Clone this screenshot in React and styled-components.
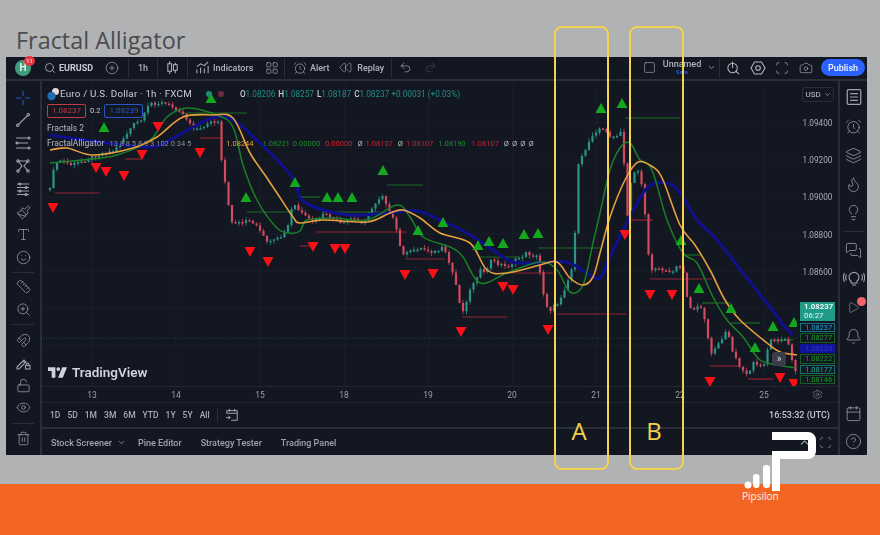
import React from 'react';
import styled, { createGlobalStyle } from 'styled-components';
import {
  AlarmClock, Bell, Calendar, Camera, ChevronDown, ChevronUp, CircleHelp, CirclePlus, Eye, Flame,
  Layers, LayoutGrid, Lightbulb, LockOpen, Magnet, MessagesSquare, Paintbrush, Play, Redo2, Rewind,
  Ruler, Scan, Search, Settings, Smile, Square, Trash2, Type, Undo2, ZoomIn,
} from 'lucide-react';

const GlobalStyle = createGlobalStyle`
  html, body { margin: 0; padding: 0; }
  body { width: 880px; height: 535px; overflow: hidden; background: #b1b2b4; }
  * { box-sizing: border-box; }
`;

/* chart data, in page pixels (the svg viewBox starts at the pane's page offset) */
const closes = [[50,190],[52,170],[60,160],[72,165],[85,160],[97,155],[115,150],[133,125],[142,120],[150,103],[163,103],[180,110],[193,127],[200,130],[208,122],[218,123],[222,167],[227,193],[230,220],[237,223],[247,220],[257,227],[263,237],[270,243],[280,238],[287,230],[293,203],[300,212],[305,217],[313,222],[323,215],[333,218],[342,225],[350,218],[363,222],[370,212],[377,200],[385,193],[387,212],[395,222],[400,247],[405,255],[417,248],[428,250],[435,252],[443,248],[448,260],[454,277],[458,293],[462,315],[467,298],[473,283],[480,270],[485,275],[490,260],[507,267],[520,257],[527,253],[537,257],[542,283],[545,303],[550,310],[558,303],[567,283],[574,262],[577,170],[585,150],[593,133],[600,128],[610,135],[618,138],[622,128],[624,165],[627,222],[630,185],[635,170],[640,172],[643,195],[647,237],[650,270],[655,267],[663,270],[668,273],[675,268],[682,263],[685,283],[688,303],[695,313],[700,303],[703,313],[707,327],[710,360],[713,350],[720,343],[723,337],[728,330],[732,350],[738,363],[743,372],[748,375],[753,363],[763,367],[769,343],[773,338],[780,340],[787,340],[795,370]];

const jaw = [[50,135],[100,142],[150,147],[170,140],[195,126],[215,117],[233,120],[260,143],[293,178],[300,198],[317,208],[350,215],[387,213],[417,211],[440,220],[467,233],[490,248],[513,262],[540,263],[567,262],[587,273],[600,278],[610,257],[632,213],[648,187],[667,183],[680,193],[697,220],[717,240],[743,273],[770,307],[785,327],[793,335]];
const lips = [[50,150],[67,148],[93,155],[133,148],[157,137],[183,117],[213,115],[233,118],[250,153],[267,178],[277,193],[293,217],[300,223],[323,220],[367,222],[390,213],[403,210],[420,218],[440,233],[470,243],[487,270],[507,273],[540,265],[557,262],[570,278],[583,285],[593,277],[600,253],[610,217],[625,180],[638,162],[653,167],[663,180],[680,225],[695,245],[710,270],[725,300],[740,320],[767,343],[780,352],[797,355]];
const teeth = [[50,163],[83,160],[117,155],[150,140],[167,117],[187,108],[217,115],[233,127],[243,165],[257,200],[277,228],[290,233],[300,231],[307,220],[333,218],[367,220],[397,205],[410,217],[423,237],[450,247],[463,257],[480,283],[507,273],[540,262],[557,270],[570,292],[583,285],[593,243],[600,213],[610,170],[620,148],[630,143],[640,160],[652,170],[667,220],[683,253],[697,263],[713,297],[727,320],[743,337],[757,357],[767,363],[795,368]];

const upMarks = [[104,127],[211,98],[246,197],[295,182],[327,197],[338,197],[352,197],[383,170],[418,230],[443,222],[478,245],[489,241],[503,243],[524,234],[538,233],[601,108],[622,103],[681,240],[699,288],[731,308],[755,347],[773,326],[794,322]];
const downMarks = [[53,208],[158,127],[200,153],[96,168],[106,172],[124,176],[142,155],[250,252],[268,262],[313,247],[335,249],[345,249],[405,275],[433,274],[461,332],[503,287],[513,290],[548,330],[625,235],[650,295],[672,295],[710,382],[780,378],[794,384]];

const redLevels = [[55,100,193],[125,142,159],[200,220,138],[300,310,246],[315,407,232],[405,445,259],[462,507,317],[513,553,273],[557,627,314],[628,653,220],[650,712,279],[710,740,366],[748,773,379]];
const greenLevels = [[180,247,113],[247,293,212],[300,320,197],[323,380,212],[387,423,185],[480,520,257],[538,600,248],[625,680,118],[685,702,255],[702,730,303],[731,760,323],[773,793,340]];

const dayLabels = ['13', '14', '15', '18', '19', '20', '21', '22', '25'];
const priceTicks = ['1.09400', '1.09200', '1.09000', '1.08800', '1.08600'];
const priceTags = [
  { text: '1.08237', color: '#2a9fd6', border: '#1d6f86', bg: 'transparent' },
  { text: '1.08277', color: '#1f9a2a', border: '#175c22', bg: 'transparent' },
  { text: '1.08239', color: '#2a38c8', border: '#12149a', bg: '#12149a' },
  { text: '1.08222', color: '#1f9a2a', border: '#175c22', bg: 'transparent' },
  { text: '1.08177', color: '#26a69a', border: '#1d6f6a', bg: 'transparent' },
  { text: '1.08146', color: '#1f9a2a', border: '#175c22', bg: 'transparent' },
];
const ranges = ['1D', '5D', '1M', '3M', '6M', 'YTD', '1Y', '5Y', 'All'];

const frac = (i) => {
  const v = Math.sin(i * 12.9898) * 43758.5453;
  return v - Math.floor(v);
};

const yAt = (x) => {
  for (let i = 1; i < closes.length; i++) {
    if (x <= closes[i][0]) {
      const [x0, y0] = closes[i - 1];
      const [x1, y1] = closes[i];
      return y0 + ((y1 - y0) * (x - x0)) / (x1 - x0);
    }
  }
  return closes[closes.length - 1][1];
};

const buildCandles = () => {
  const list = [];
  let prev = yAt(50);
  for (let i = 0, x = 50; x < 797; i++, x += 3.5) {
    const close = yAt(x) + (frac(i) - 0.5) * 4;
    const top = Math.min(prev, close);
    const bottom = Math.max(prev, close);
    list.push({
      x,
      top,
      height: Math.max(bottom - top, 1.5),
      high: top - frac(i + 100) * 3.5,
      low: bottom + frac(i + 200) * 3.5,
      up: close < prev,
    });
    prev = close;
  }
  return list;
};

const smoothPath = (pts) => {
  let d = `M${pts[0][0]},${pts[0][1]}`;
  for (let i = 0; i < pts.length - 1; i++) {
    const p0 = pts[i - 1] || pts[i];
    const p1 = pts[i];
    const p2 = pts[i + 1];
    const p3 = pts[i + 2] || p2;
    const c1x = p1[0] + (p2[0] - p0[0]) / 6;
    const c1y = p1[1] + (p2[1] - p0[1]) / 6;
    const c2x = p2[0] - (p3[0] - p1[0]) / 6;
    const c2y = p2[1] - (p3[1] - p1[1]) / 6;
    d += `C${c1x},${c1y} ${c2x},${c2y} ${p2[0]},${p2[1]}`;
  }
  return d;
};

const Page = styled.div`
  width: 880px;
  height: 535px;
  position: relative;
  overflow: hidden;
`;

const Stage = styled.div`
  height: 484px;
  padding-top: 26px;
  background: #b1b2b4;
`;

const Title = styled.h1`
  margin: 0 0 0 16px;
  height: 31px;
  font: 400 23.4px/28px 'Open Sans', sans-serif;
  color: #4a4c50;
`;

const Terminal = styled.div`
  margin-left: 6px;
  width: 861px;
  height: 398px;
  display: grid;
  grid-template-columns: 34px 1fr 29px;
  grid-template-rows: 24px 1fr;
  background: #131722;
  color: #b9bcc5;
  font-family: Roboto, 'Liberation Sans', sans-serif;
  filter: blur(0.5px);
`;

const TopBar = styled.div`
  grid-column: 1 / 4;
  display: flex;
  align-items: center;
  border-bottom: 2px solid #2a2e39;
  padding-bottom: 1px;
`;

const Cell = styled.div`
  flex: none;
  width: ${(p) => p.$w}px;
  height: 20px;
  display: flex;
  align-items: center;
  justify-content: ${(p) => (p.$pad !== undefined ? 'flex-start' : 'center')};
  gap: 3px;
  padding-left: ${(p) => p.$pad || 0}px;
  border-right: ${(p) => (p.$sep ? '1px solid #2a2e39' : 'none')};
  font-size: 9px;
  font-weight: 500;
  color: ${(p) => p.$color || '#b0b3bc'};
`;

const TopRight = styled.div`
  margin-left: auto;
  display: flex;
  align-items: center;
  padding-right: 2px;
`;

const Avatar = styled.div`
  position: relative;
  width: 16px;
  height: 16px;
  border-radius: 50%;
  background: #3f9d7c;
  color: #e8f3ee;
  font-size: 10px;
  font-weight: 700;
  line-height: 16px;
  text-align: center;
`;

const Badge = styled.span`
  position: absolute;
  top: -4px;
  left: 9px;
  width: 11px;
  height: 10px;
  border-radius: 50%;
  background: #e8323f;
  color: #f7c6ca;
  font-size: 5.5px;
  line-height: 10px;
`;

const LayoutName = styled.div`
  display: flex;
  flex-direction: column;
  align-items: center;
  font-size: 9px;
  line-height: 9px;
  small {
    font-size: 5.5px;
    line-height: 7px;
    color: #2962ff;
  }
`;

const Publish = styled.button`
  width: 44px;
  height: 17px;
  margin-left: 3px;
  padding: 0;
  border: 0;
  border-radius: 9px;
  background: #2962ff;
  color: #f0f3fa;
  font: 500 9px Roboto, sans-serif;
`;

const SideBar = styled.div`
  display: flex;
  flex-direction: column;
  align-items: center;
  padding-top: ${(p) => (p.$right ? 2 : 6)}px;
  border-left: ${(p) => (p.$right ? '2px solid #2a2e39' : 'none')};
`;

const ToolSlot = styled.div`
  flex: none;
  width: 100%;
  height: ${(p) => p.$h}px;
  display: flex;
  align-items: center;
  justify-content: center;
  position: relative;
  color: #9fa2ab;
`;

const ToolSep = styled.hr`
  flex: none;
  width: 22px;
  height: 1px;
  margin: ${(p) => p.$m || '4px 0'};
  border: 0;
  background: #2a2e39;
`;

const Spacer = styled.div`
  flex: 1;
`;

const Dot = styled.span`
  position: absolute;
  top: 5px;
  right: 1px;
  width: 9px;
  height: 9px;
  border-radius: 50%;
  background: #f0636b;
`;

const Center = styled.div`
  display: flex;
  flex-direction: column;
  min-width: 0;
  border-left: 2px solid #2a2e39;
`;

const ChartRow = styled.div`
  flex: none;
  height: 305px;
  display: flex;
`;

const Pane = styled.div`
  position: relative;
  flex: none;
  width: 755px;
  height: 305px;
`;

const ChartSvg = styled.svg`
  display: block;
`;

const Legend = styled.div`
  position: absolute;
  top: 4px;
  left: 5px;
  display: flex;
  flex-direction: column;
  font-size: 8.5px;
`;

const LegendRow = styled.div`
  display: flex;
  align-items: center;
  gap: ${(p) => p.$gap}px;
  height: ${(p) => p.$h}px;
  white-space: nowrap;
`;

const Symbol = styled.span`
  font-size: 9.8px;
  letter-spacing: 0.2px;
  color: #c8ccd4;
`;

const Ohlc = styled.span`
  margin-left: 13px;
  font-size: 8.2px;
  color: #1f8f82;
  b {
    font-weight: 500;
    color: #c8ccd4;
    margin-left: 3px;
  }
`;

const PriceBox = styled.span`
  width: 39px;
  height: 14px;
  border: 1px solid ${(p) => p.$c};
  border-radius: 2px;
  color: ${(p) => p.$c};
  font-size: 8px;
  line-height: 12px;
  text-align: center;
`;

const Value = styled.span`
  color: ${(p) => p.$c || '#b9bcc5'};
  font-size: 7.5px;
  margin-left: ${(p) => p.$ml || 0}px;
`;

const StatusDot = styled.span`
  width: 6px;
  height: 6px;
  border-radius: 50%;
  background: ${(p) => p.$c};
  margin-left: ${(p) => p.$ml || 0}px;
`;

const Watermark = styled.div`
  position: absolute;
  left: 6px;
  top: 283px;
  display: flex;
  align-items: center;
  gap: 5px;
  font-size: 13.5px;
  font-weight: 600;
  color: #d1d4dc;
`;

const GoLive = styled.div`
  position: absolute;
  left: 730px;
  top: 271px;
  width: 14px;
  height: 14px;
  border-radius: 3px;
  background: #3a3d47;
  color: #d1d4dc;
  font-size: 10px;
  line-height: 13px;
  text-align: center;
`;

const PriceAxis = styled.div`
  flex: 1;
  display: flex;
  flex-direction: column;
  align-items: center;
  padding-top: 6px;
  font-size: 8.2px;
  color: #a8abb4;
`;

const UsdButton = styled.div`
  width: 32px;
  height: 15px;
  padding: 0 2px 0 3px;
  display: flex;
  align-items: center;
  justify-content: space-between;
  border: 1px solid #2a2e39;
  border-radius: 3px;
  font-size: 8px;
  color: #c4c7cf;
`;

const PriceTicks = styled.div`
  margin-top: 3px;
`;

const PriceTick = styled.div`
  height: 37.2px;
  line-height: 37px;
`;

const TagStack = styled.div`
  margin-top: 11px;
  width: 35px;
  display: flex;
  flex-direction: column;
  gap: 1px;
`;

const LastPrice = styled.div`
  height: 19px;
  margin-bottom: 1px;
  padding-left: 4px;
  background: #1f9c88;
  color: #e9f6f3;
  font-size: 7.8px;
  line-height: 9.5px;
  b {
    font-weight: 700;
  }
`;

const PriceTag = styled.div`
  height: 9.4px;
  padding-left: 4px;
  border: 1px solid ${(p) => p.$border};
  background: ${(p) => p.$bg};
  color: ${(p) => p.$color};
  font-size: 7.5px;
  line-height: 8px;
`;

const TimeAxis = styled.div`
  flex: none;
  height: 17px;
  display: flex;
  align-items: center;
  padding-left: 8px;
  border-top: 1px solid #222632;
  border-bottom: 1px solid #222632;
`;

const DayLabel = styled.span`
  flex: none;
  width: 84px;
  text-align: center;
  font-size: 8.5px;
  color: #9b9ea8;
`;

const AxisGear = styled.span`
  margin-left: 6px;
  display: flex;
  color: #8f929c;
`;

const RangeBar = styled.div`
  flex: none;
  height: 26px;
  display: flex;
  align-items: center;
  padding-left: 8px;
  gap: 7px;
  font-size: 8.5px;
  font-weight: 500;
  color: #a8abb4;
  border-bottom: 2px solid #2a2e39;
`;

const RangeSep = styled.span`
  width: 1px;
  height: 14px;
  background: #2a2e39;
`;

const Clock = styled.span`
  margin-left: auto;
  padding-right: 8px;
  font-size: 9px;
  font-weight: 500;
  color: #c4c7cf;
`;

const TabBar = styled.div`
  flex: 1;
  display: flex;
  align-items: center;
  padding: 1px 0 0 9px;
  font-size: 9px;
  font-weight: 500;
  color: #a0a3ac;
`;

const Tab = styled.span`
  display: flex;
  align-items: center;
  gap: 5px;
  margin-right: ${(p) => p.$mr || 19}px;
  white-space: nowrap;
`;

const TabTools = styled.div`
  margin-left: auto;
  display: flex;
  align-items: center;
  gap: 8px;
  padding-right: 6px;
  color: #9ea1aa;
`;

const Zone = styled.div`
  position: absolute;
  top: 26px;
  left: ${(p) => p.$left}px;
  width: 55px;
  height: 444px;
  padding: 387px 5px 0 0;
  border: 2.5px solid #f4d14e;
  border-radius: 8px;
  text-align: center;
  font: 400 24px/32px 'Open Sans', sans-serif;
  color: #f4d14e;
`;

const Logo = styled.div`
  position: absolute;
  left: 742px;
  top: 430px;
  width: 78px;
  svg {
    display: block;
  }
`;

const LogoName = styled.span`
  display: block;
  margin-top: -2px;
  font: 400 10px/12px 'Open Sans', sans-serif;
  color: #f6f2ee;
`;

const Footer = styled.div`
  height: 51px;
  background: #f26522;
`;

const ico = { size: 15, strokeWidth: 1.2 };
const side = { size: 17, strokeWidth: 1.1 };

const Line = (props) => (
  <svg width="16" height="16" viewBox="0 0 16 16" fill="none" stroke="currentColor" strokeWidth="1.1" {...props}>
    {props.children}
  </svg>
);

const LeftTools = () => (
  <SideBar>
    <ToolSlot $h={22}><Line stroke="#2a56c6"><path d="M8 1v5M8 10v5M1 8h5M10 8h5" /></Line></ToolSlot>
    <ToolSlot $h={22}><Line><path d="M3.5 12.5l9-9" /><circle cx="2.7" cy="13.3" r="1.2" /><circle cx="13.3" cy="2.7" r="1.2" /></Line></ToolSlot>
    <ToolSlot $h={24}><Line><path d="M1 3h12M1 8h12M1 13h12" /><circle cx="14" cy="3" r="1" /><circle cx="2" cy="8" r="1" /><circle cx="14" cy="13" r="1" /></Line></ToolSlot>
    <ToolSlot $h={22}><Line><path d="M3 3l4 5-4 5M13 3L9 8l4 5M3 3l10 0" /><circle cx="3" cy="3" r="1.2" /><circle cx="13" cy="3" r="1.2" /><circle cx="3" cy="13" r="1.2" /><circle cx="13" cy="13" r="1.2" /></Line></ToolSlot>
    <ToolSlot $h={24}><Line><path d="M2 3h12M2 6.5h12M2 10h12M2 13.5h12" /><circle cx="5" cy="3" r="1" /><circle cx="11" cy="6.5" r="1" /><circle cx="5" cy="10" r="1" /><circle cx="11" cy="13.5" r="1" /></Line></ToolSlot>
    <ToolSlot $h={22}><Paintbrush {...ico} /></ToolSlot>
    <ToolSlot $h={22}><Type {...ico} /></ToolSlot>
    <ToolSlot $h={24}><Smile {...ico} /></ToolSlot>
    <ToolSep $m="3px 0 2px" />
    <ToolSlot $h={22}><Ruler {...ico} /></ToolSlot>
    <ToolSlot $h={24}><ZoomIn {...ico} /></ToolSlot>
    <ToolSep $m="3px 0 4px" />
    <ToolSlot $h={22}><Magnet {...ico} /></ToolSlot>
    <ToolSlot $h={24}><Line><path d="M2 12l7-7 2 2-7 7H2zM8 6l2 2" /><rect x="10.5" y="10.5" width="4.5" height="3.5" /><path d="M11.5 10.5V9.3a1.2 1.2 0 0 1 2.4 0v1.2" /></Line></ToolSlot>
    <ToolSlot $h={21}><LockOpen {...ico} /></ToolSlot>
    <ToolSlot $h={23}><Eye {...ico} /></ToolSlot>
    <ToolSep $m="4px 0 3px" />
    <ToolSlot $h={22}><Trash2 {...ico} /></ToolSlot>
  </SideBar>
);

const RightTools = () => (
  <SideBar $right>
    <ToolSlot $h={28}><Line width="18" height="18"><rect x="2" y="1.5" width="12" height="13" rx="1" /><path d="M4.5 5h7M4.5 8h7M4.5 11h7" /></Line></ToolSlot>
    <ToolSlot $h={30}><AlarmClock {...side} /></ToolSlot>
    <ToolSlot $h={29}><Layers {...side} /></ToolSlot>
    <ToolSlot $h={28}><Flame {...side} /></ToolSlot>
    <ToolSlot $h={28}><Lightbulb {...side} /></ToolSlot>
    <ToolSep $m="5px 0" />
    <ToolSlot $h={27}><MessagesSquare {...side} /></ToolSlot>
    <ToolSlot $h={28}>
      <Line width="22" height="18" viewBox="0 0 22 16">
        <path d="M8 11c-1.5-1-2-2.4-2-3.6a5 5 0 0 1 10 0c0 1.2-.5 2.6-2 3.6v2H8zM9 15h4" />
        <path d="M3.5 4.5c-1.2 2-1.2 4 0 6M1.5 3c-1.5 3-1.5 6 0 9M18.5 4.5c1.2 2 1.2 4 0 6M20.5 3c1.5 3 1.5 6 0 9" />
      </Line>
    </ToolSlot>
    <ToolSlot $h={30}><Play size={13} strokeWidth={1.1} /><Dot /></ToolSlot>
    <ToolSlot $h={28}><Bell {...side} /></ToolSlot>
    <Spacer />
    <ToolSlot $h={28}><Calendar {...side} /></ToolSlot>
    <ToolSlot $h={28}><CircleHelp {...side} /></ToolSlot>
  </SideBar>
);

const TopTools = () => (
  <TopBar>
    <Cell $w={34}>
      <Avatar>H<Badge>11</Badge></Avatar>
    </Cell>
    <Cell $w={56} $pad={4} $color="#c8ccd4"><Search size={12} strokeWidth={1.4} /><b>EURUSD</b></Cell>
    <Cell $w={33} $sep><CirclePlus size={14} strokeWidth={1.1} /></Cell>
    <Cell $w={29} $sep>1h</Cell>
    <Cell $w={30} $sep>
      <Line width="15" height="15"><path d="M5 1v14M11 3v11" /><rect x="3" y="4" width="4" height="8" fill="#131722" /><rect x="9" y="5" width="4" height="6" fill="#131722" /></Line>
    </Cell>
    <Cell $w={71} $pad={7}>
      <Line width="15" height="15"><path d="M2 14v-4M6 14V8M10 14V9M14 14V6M2 7l4-3 4 2 4-4" /></Line>
      Indicators
    </Cell>
    <Cell $w={26} $sep><LayoutGrid size={14} strokeWidth={1.1} /></Cell>
    <Cell $w={52} $pad={8}><AlarmClock size={14} strokeWidth={1.1} />Alert</Cell>
    <Cell $w={55} $pad={2} $sep><Rewind size={13} strokeWidth={1.1} />&nbsp;Replay</Cell>
    <Cell $w={26}><Undo2 size={13} strokeWidth={1.2} /></Cell>
    <Cell $w={24} $color="#444853"><Redo2 size={13} strokeWidth={1.2} /></Cell>
    <TopRight>
      <Cell $w={24}><Square size={13} strokeWidth={1.1} /></Cell>
      <Cell $w={42}><LayoutName>Unnamed<small>Save</small></LayoutName></Cell>
      <Cell $w={17} $sep><ChevronDown size={9} /></Cell>
      <Cell $w={26}>
        <Line width="15" height="15"><circle cx="7" cy="8.5" r="5" /><path d="M7 8.5V3.5M7 1.5v2M10.5 12l3.5 3" /></Line>
      </Cell>
      <Cell $w={24}>
        <Line width="16" height="16"><path d="M4.5 2h7L15 8l-3.5 6h-7L1 8z" /><circle cx="8" cy="8" r="2.3" /></Line>
      </Cell>
      <Cell $w={24}><Scan size={14} strokeWidth={1.1} /></Cell>
      <Cell $w={24}><Camera size={14} strokeWidth={1.1} /></Cell>
      <Publish>Publish</Publish>
    </TopRight>
  </TopBar>
);

const Chart = () => {
  const candles = buildCandles();
  return (
    <ChartSvg width="755" height="305" viewBox="42 81 755 305">
      {[92, 176, 260, 345, 429, 513, 597, 681, 765].map((x) => (
        <line key={x} x1={x} x2={x} y1="81" y2="386" stroke="#1a1f2c" />
      ))}
      {[123, 160, 197, 234, 271, 308, 345].map((y) => (
        <line key={y} x1="40" x2="797" y1={y} y2={y} stroke="#1a1f2c" />
      ))}
      <line x1="40" x2="797" y1="338" y2="338" stroke="#164a48" strokeDasharray="1 2" />
      {redLevels.map(([a, b, y]) => (
        <line key={`r${a}`} x1={a} x2={b} y1={y} y2={y} stroke="#8f2430" strokeWidth="1.2" />
      ))}
      {greenLevels.map(([a, b, y]) => (
        <line key={`g${a}`} x1={a} x2={b} y1={y} y2={y} stroke="#1c6b25" strokeWidth="1.2" />
      ))}
      {candles.map((c) => (
        <g key={c.x} fill={c.up ? '#2a9486' : '#d24a5e'} stroke={c.up ? '#2a9486' : '#d24a5e'}>
          <line x1={c.x} x2={c.x} y1={c.high} y2={c.low} strokeWidth="0.7" />
          <rect x={c.x - 1.1} y={c.top} width="2.2" height={c.height} stroke="none" />
        </g>
      ))}
      <path d={smoothPath(jaw)} fill="none" stroke="#0e108e" strokeWidth="3" />
      <path d={smoothPath(teeth)} fill="none" stroke="#1a7f27" strokeWidth="1.5" />
      <path d={smoothPath(lips)} fill="none" stroke="#e6a13c" strokeWidth="1.6" />
      {upMarks.map(([x, y]) => (
        <polygon key={`u${x}`} points={`${x - 5.5},${y + 5} ${x + 5.5},${y + 5} ${x},${y - 5}`} fill="#14a81f" />
      ))}
      {downMarks.map(([x, y]) => (
        <polygon key={`d${x}`} points={`${x - 5.5},${y - 5} ${x + 5.5},${y - 5} ${x},${y + 5}`} fill="#fb1018" />
      ))}
    </ChartSvg>
  );
};

const ChartLegend = () => (
  <Legend>
    <LegendRow $h={17} $gap={0}>
      <svg width="13" height="14" viewBox="0 0 13 14">
        <circle cx="8.5" cy="4.5" r="3.5" fill="#e9d9dc" />
        <circle cx="4.5" cy="9" r="4.2" fill="#1f6fb0" />
      </svg>
      <Symbol>Euro / U.S. Dollar · 1h · FXCM</Symbol>
      <StatusDot $c="#1f8f6a" $ml={14} />
      <StatusDot $c="#6b2a45" $ml={6} />
      <Ohlc>
        <b>O</b>1.08206<b>H</b>1.08257<b>L</b>1.08187<b>C</b>1.08237 +0.00031 (+0.03%)
      </Ohlc>
    </LegendRow>
    <LegendRow $h={17} $gap={4}>
      <PriceBox $c="#c23a44">1.08237</PriceBox>
      <Value $c="#c4c7cf">0.2</Value>
      <PriceBox $c="#2a55c8">1.08239</PriceBox>
    </LegendRow>
    <LegendRow $h={18} $gap={0}>Fractals 2</LegendRow>
    <LegendRow $h={12} $gap={0}>
      FractalAlligator
      <Value $c="#8e919b" $ml={5}>13 8 8 5 8 9 3 102 0 34 5</Value>
      <Value $c="#e6a13c" $ml={35}>1.08244</Value>
      <Value $c="#1d8a2b" $ml={9}>1.08221</Value>
      <Value $c="#1d8a2b" $ml={3}>0.00000</Value>
      <Value $c="#d01f2b" $ml={5}>0.00000</Value>
      <Value $ml={5}>Ø</Value>
      <Value $c="#d01f2b" $ml={3}>1.08107</Value>
      <Value $ml={5}>Ø</Value>
      <Value $c="#d01f2b" $ml={3}>1.08107</Value>
      <Value $c="#1d8a2b" $ml={5}>1.08190</Value>
      <Value $c="#d01f2b" $ml={6}>1.08107</Value>
      <Value $ml={5}>Ø</Value>
      <Value $ml={3}>Ø</Value>
      <Value $ml={3}>Ø</Value>
      <Value $ml={3}>Ø</Value>
    </LegendRow>
  </Legend>
);

const App = () => (
  <Page>
    <GlobalStyle />
    <Stage>
      <Title>Fractal Alligator</Title>
      <Terminal>
        <TopTools />
        <LeftTools />
        <Center>
          <ChartRow>
            <Pane>
              <Chart />
              <ChartLegend />
              <Watermark>
                <svg width="19" height="11" viewBox="0 0 36 20" fill="#d1d4dc">
                  <path d="M0 0h14v20H7V7H0z" />
                  <circle cx="19.5" cy="3.5" r="3.5" />
                  <path d="M27 0h9l-8 20h-9z" />
                </svg>
                TradingView
              </Watermark>
              <GoLive>»</GoLive>
            </Pane>
            <PriceAxis>
              <UsdButton>USD<ChevronDown size={7} /></UsdButton>
              <PriceTicks>
                {priceTicks.map((t) => <PriceTick key={t}>{t}</PriceTick>)}
              </PriceTicks>
              <TagStack>
                <LastPrice><b>1.08237</b><br />06:27</LastPrice>
                {priceTags.map((t) => (
                  <PriceTag key={t.text} $color={t.color} $border={t.border} $bg={t.bg}>{t.text}</PriceTag>
                ))}
              </TagStack>
            </PriceAxis>
          </ChartRow>
          <TimeAxis>
            {dayLabels.map((d) => <DayLabel key={d}>{d}</DayLabel>)}
            <AxisGear><Settings size={11} strokeWidth={1.2} /></AxisGear>
          </TimeAxis>
          <RangeBar>
            {ranges.map((r) => <span key={r}>{r}</span>)}
            <RangeSep />
            <Line width="14" height="14"><path d="M2 6V3h12v11H7M2 6h12M5 1v3M11 1v3M1 11h5M4 9l2 2-2 2" /></Line>
            <Clock>16:53:32 (UTC)</Clock>
          </RangeBar>
          <TabBar>
            <Tab $mr={12}>Stock Screener<ChevronDown size={9} /></Tab>
            <Tab>Pine Editor</Tab>
            <Tab>Strategy Tester</Tab>
            <Tab>Trading Panel</Tab>
            <TabTools><ChevronUp size={13} /><Scan size={13} strokeWidth={1.1} /></TabTools>
          </TabBar>
        </Center>
        <RightTools />
      </Terminal>
    </Stage>
    <Footer />
    <Zone $left={554}>A</Zone>
    <Zone $left={629}>B</Zone>
    <Logo>
      <svg width="78" height="62" viewBox="0 0 78 62" fill="#fff">
        <path d="M30 6h36a4 4 0 0 1 4 4v11a4 4 0 0 1-4 4H34v36" fill="none" stroke="#fff" strokeWidth="8" />
        <circle cx="6" cy="55" r="3.5" />
        <rect x="11" y="44" width="6.5" height="14" rx="3" />
        <rect x="21" y="35" width="7" height="23" rx="3" />
      </svg>
      <LogoName>Pipsilon</LogoName>
    </Logo>
  </Page>
);

export default App;
